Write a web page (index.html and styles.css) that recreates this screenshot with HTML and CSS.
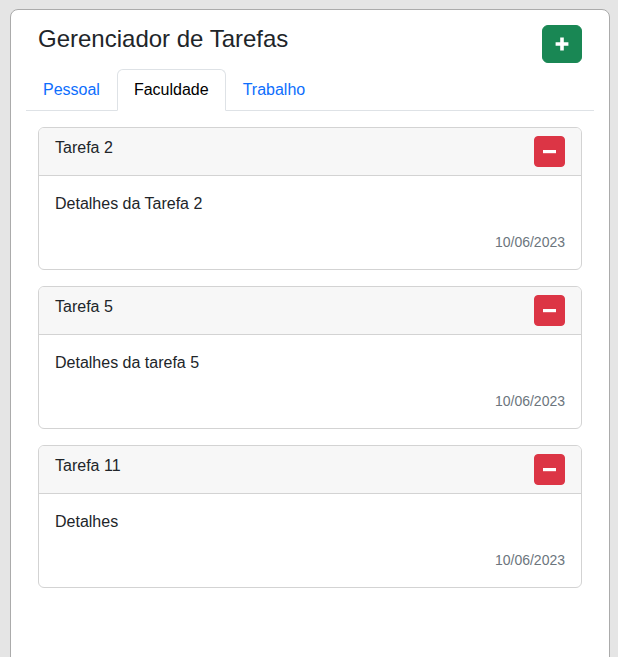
FILE: index.html
```html
<!DOCTYPE html>
<html lang="pt-BR">
<head>
<meta charset="utf-8">
<title>Gerenciador de Tarefas</title>
<link rel="stylesheet" href="styles.css">
</head>
<body>
<div class="app">
  <div class="app-header">
    <h1 class="app-title">Gerenciador de Tarefas</h1>
    <button class="btn btn-add" type="button" aria-label="Adicionar">
      <svg width="14" height="14" viewBox="0 0 14 14"><path d="M5.2 0.6h3.6v4.6h4.6v3.6H8.8v4.6H5.2V8.8H0.6V5.2h4.6z" fill="#fff"/></svg>
    </button>
  </div>
  <ul class="tabs">
    <li><a class="tab" href="#">Pessoal</a></li>
    <li><a class="tab active" href="#">Faculdade</a></li>
    <li><a class="tab" href="#">Trabalho</a></li>
  </ul>
  <div class="tab-content">
    <div class="card">
      <div class="card-header">
        <span class="card-title">Tarefa 2</span>
        <button class="btn btn-remove" type="button" aria-label="Remover">
          <svg width="13" height="13" viewBox="0 0 13 13"><rect x="0" y="5" width="13" height="3.2" fill="#fff"/></svg>
        </button>
      </div>
      <div class="card-body">
        <p class="card-text">Detalhes da Tarefa 2</p>
        <div class="card-date">10/06/2023</div>
      </div>
    </div>
    <div class="card">
      <div class="card-header">
        <span class="card-title">Tarefa 5</span>
        <button class="btn btn-remove" type="button" aria-label="Remover">
          <svg width="13" height="13" viewBox="0 0 13 13"><rect x="0" y="5" width="13" height="3.2" fill="#fff"/></svg>
        </button>
      </div>
      <div class="card-body">
        <p class="card-text">Detalhes da tarefa 5</p>
        <div class="card-date">10/06/2023</div>
      </div>
    </div>
    <div class="card">
      <div class="card-header">
        <span class="card-title">Tarefa 11</span>
        <button class="btn btn-remove" type="button" aria-label="Remover">
          <svg width="13" height="13" viewBox="0 0 13 13"><rect x="0" y="5" width="13" height="3.2" fill="#fff"/></svg>
        </button>
      </div>
      <div class="card-body">
        <p class="card-text">Detalhes</p>
        <div class="card-date">10/06/2023</div>
      </div>
    </div>
  </div>
</div>
</body>
</html>
```
FILE: styles.css
```css
* { box-sizing: border-box; }
html, body { height: 100%; }
body {
  margin: 0;
  background: #e5e5e5;
  font-family: "Liberation Sans", Arial, sans-serif;
  font-size: 16px;
  line-height: 1.5;
  color: #212529;
  overflow: hidden;
}
.app {
  margin: 9px 9px 0 10px;
  width: 600px;
  min-height: 700px;
  background: #fff;
  border: 1px solid #ababab;
  border-radius: 8px;
  padding: 15px;
}
.app-header {
  display: flex;
  justify-content: space-between;
  align-items: flex-start;
  padding: 0 12px;
  margin-bottom: 6px;
}
.app-title {
  margin: 0;
  font-size: 24px;
  font-weight: 400;
  line-height: 1.2;
  color: #212529;
}
.btn {
  display: inline-flex;
  align-items: center;
  justify-content: center;
  border: 1px solid transparent;
  cursor: pointer;
  padding: 0;
}
.btn-add {
  width: 40px;
  height: 38px;
  border-radius: 6px;
  background: #198754;
  border-color: #198754;
}
.btn-remove {
  width: 31px;
  height: 31px;
  border-radius: 4px;
  background: #dc3545;
  border-color: #dc3545;
}
.tabs {
  list-style: none;
  margin: 0;
  padding: 0;
  display: flex;
  border-bottom: 1px solid #dee2e6;
}
.tab {
  display: block;
  padding: 8px 16px;
  margin-bottom: -1px;
  border: 1px solid transparent;
  border-radius: 6px 6px 0 0;
  color: #0d6efd;
  text-decoration: none;
  line-height: 24px;
}
.tab.active {
  color: #000;
  background: #fff;
  border-color: #dee2e6 #dee2e6 #fff;
}
.tab-content {
  padding: 16px 12px;
}
.card {
  border: 1px solid #d3d3d3;
  border-radius: 6px;
  margin-bottom: 16px;
  overflow: hidden;
}
.card-header {
  display: flex;
  justify-content: space-between;
  align-items: flex-start;
  padding: 8px 16px;
  background: #f7f7f7;
  border-bottom: 1px solid #d3d3d3;
}
.card-title {
  line-height: 24px;
}
.card-body {
  padding: 16px;
}
.card-text {
  margin: 0 0 16px;
  line-height: 24px;
}
.card-date {
  text-align: right;
  font-size: 14px;
  line-height: 21px;
  color: #6c757d;
}
```
